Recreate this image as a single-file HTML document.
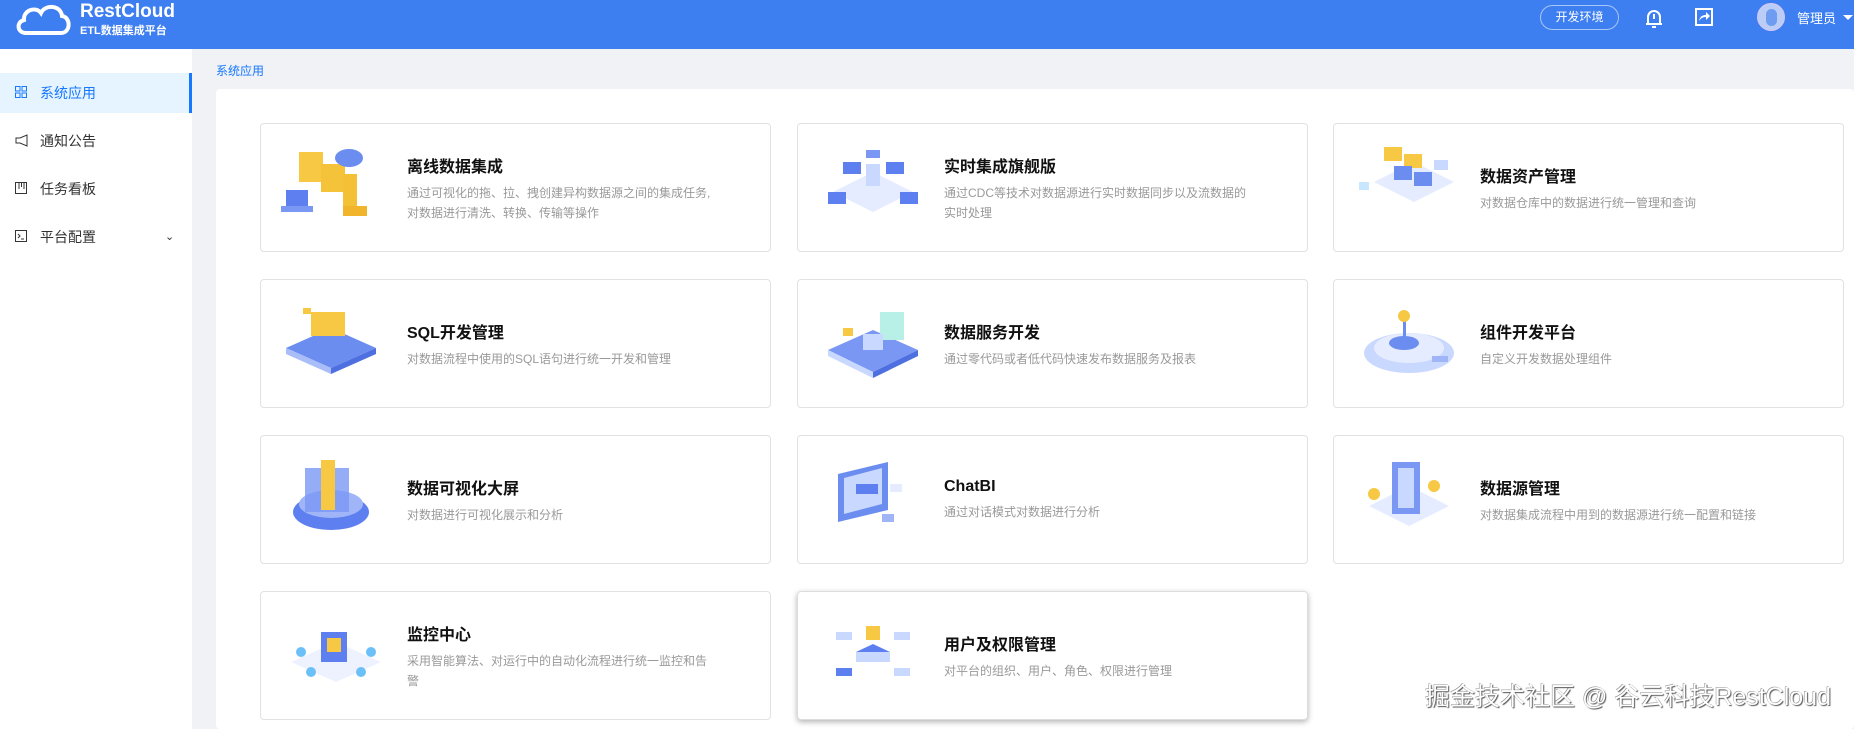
<!DOCTYPE html>
<html><head><meta charset="utf-8"><style>
*{margin:0;padding:0;box-sizing:border-box}
body{width:1854px;height:729px;overflow:hidden;background:#f0f2f5;font-family:"Liberation Sans","Noto Sans CJK SC",sans-serif;position:relative}
.hd{position:absolute;left:0;top:0;width:1854px;height:49px;background:#3d7ef0}
.side{position:absolute;left:0;top:49px;width:192px;height:680px;background:#fff}
.mi{position:absolute;left:0;width:192px;height:40px;font-size:14px;color:#333;line-height:40px;padding-left:40px}
.mi svg{position:absolute;left:15px;top:13px}
.act{background:#e6f4ff;color:#1677ff;border-right:3px solid #1677ff}
.bc{position:absolute;left:216px;top:62px;font-size:12px;color:#1677ff}
.panel{position:absolute;left:216px;top:89px;width:1638px;height:640px;background:#fff;border-radius:4px}
.card{position:absolute;width:511px;height:129px;border:1px solid #e2e2e2;border-radius:4px;background:#fff}
.card .tx{position:absolute;left:146px;top:0;height:100%;width:340px;display:flex;flex-direction:column;justify-content:center}
.card h3{font-size:16px;font-weight:bold;color:#111;margin-bottom:6px}
.card p{font-size:12px;color:#999;line-height:20px}
.card svg{position:absolute;left:20px;top:18px}
.wm{position:absolute;left:1425px;top:677px;font-size:25px;color:#fff;text-shadow:1px 1px 1px #555,-0.5px -0.5px 0 #888;white-space:nowrap}
</style></head><body>
<div class="hd">
<svg style="position:absolute;left:14px;top:2px" width="58" height="34" viewBox="0 0 58 34"><path d="M12 31 C3 31 2 20 10 18 C9 8 22 4 27 11 C31 2 47 3 48 14 C57 15 57 31 47 31 Z" fill="none" stroke="#fff" stroke-width="4"/></svg>
<div style="position:absolute;left:80px;top:1px;color:#fff;font-size:19px;font-weight:bold">RestCloud</div>
<div style="position:absolute;left:80px;top:22px;color:#fff;font-size:11px;font-weight:bold">ETL数据集成平台</div>
<div style="position:absolute;left:1540px;top:5px;width:79px;height:25px;border:1px solid #a9c6f8;border-radius:13px;color:#fff;font-size:12px;text-align:center;line-height:23px">开发环境</div>
<svg style="position:absolute;left:1645px;top:8px" width="18" height="22" viewBox="0 0 18 22"><path d="M3 16 L3 9 A6 6 0 0 1 15 9 L15 16 Z M1 16 H17 M7 19 H11" fill="none" stroke="#fff" stroke-width="2"/><path d="M9 6v5" stroke="#fff" stroke-width="2"/></svg>
<svg style="position:absolute;left:1695px;top:8px" width="18" height="18" viewBox="0 0 18 18"><rect x="1" y="1" width="16" height="16" fill="none" stroke="#fff" stroke-width="2"/><path d="M4 13 C5 8 8 7 11 7 V4 L15 8 L11 12 V9 C8 9 6 10 4 13Z" fill="#fff"/></svg>
<div style="position:absolute;left:1757px;top:3px;width:28px;height:28px;border-radius:50%;background:#b9cdf6;border:1px solid #d9c6f5"><div style="position:absolute;left:8px;top:5px;width:11px;height:17px;border-radius:6px;background:#6d9cf0"></div></div>
<div style="position:absolute;left:1797px;top:8px;color:#fff;font-size:13px">管理员</div>
<div style="position:absolute;left:1843px;top:15px;border:5px solid transparent;border-top-color:#fff"></div>
</div>
<div class="side">
<div class="mi act" style="top:24px"><svg width="12" height="12"><rect x="0.5" y="0.5" width="4.5" height="4.5" fill="none" stroke="#1677ff"/><rect x="7" y="0.5" width="4.5" height="4.5" fill="none" stroke="#1677ff"/><rect x="0.5" y="7" width="4.5" height="4.5" fill="none" stroke="#1677ff"/><rect x="7" y="7" width="4.5" height="4.5" fill="none" stroke="#1677ff"/></svg>系统应用</div>
<div class="mi" style="top:72px"><svg width="13" height="13"><path d="M1 4 H5 L12 1 V12 L5 9 H1 Z" fill="none" stroke="#333"/></svg>通知公告</div>
<div class="mi" style="top:120px"><svg width="12" height="12"><rect x="0.5" y="0.5" width="11" height="11" fill="none" stroke="#333"/><path d="M4 1v6M6.5 1v4M9 1v6" stroke="#333"/></svg>任务看板</div>
<div class="mi" style="top:168px"><svg width="12" height="12"><rect x="0.5" y="0.5" width="11" height="11" fill="none" stroke="#333"/><path d="M3 4l2 2-2 2M6 9h3" fill="none" stroke="#333"/></svg>平台配置<span style="position:absolute;left:165px;top:0;font-size:11px">&#8964;</span></div>
</div>
<div class="bc">系统应用</div>
<div class="panel"></div>

<div class="card" style="left:260px;top:123px"><svg width="110" height="90"><rect x="18" y="10" width="24" height="30" fill="#f7c844"/><rect x="40" y="22" width="24" height="28" fill="#f5c33a"/><rect x="62" y="32" width="14" height="40" fill="#f4c035"/><rect x="62" y="64" width="24" height="10" fill="#f0b52a"/><ellipse cx="68" cy="16" rx="14" ry="9" fill="#6b8df0"/><rect x="5" y="48" width="22" height="16" fill="#5d7ff0"/><rect x="0" y="64" width="32" height="6" fill="#7a97f4"/></svg><div class="tx"><h3>离线数据集成</h3><p>通过可视化的拖、拉、拽创建异构数据源之间的集成任务,<br>对数据进行清洗、转换、传输等操作</p></div></div>
<div class="card" style="left:797px;top:123px"><svg width="110" height="90"><path d="M15 50 L55 30 L95 50 L55 70Z" fill="#e6ecff"/><rect x="48" y="22" width="14" height="22" fill="#c8d8ff"/><rect x="25" y="20" width="18" height="12" fill="#5d7ff0"/><rect x="68" y="20" width="18" height="12" fill="#5d7ff0"/><rect x="10" y="50" width="18" height="12" fill="#5d7ff0"/><rect x="82" y="50" width="18" height="12" fill="#5d7ff0"/><rect x="48" y="8" width="14" height="8" fill="#7a97f4"/></svg><div class="tx"><h3>实时集成旗舰版</h3><p>通过CDC等技术对数据源进行实时数据同步以及流数据的<br>实时处理</p></div></div>
<div class="card" style="left:1333px;top:123px"><svg width="110" height="90"><path d="M20 40 L60 20 L100 40 L60 60Z" fill="#e6ecff"/><rect x="30" y="5" width="18" height="14" fill="#f7c844"/><rect x="50" y="12" width="18" height="14" fill="#f7c844"/><rect x="40" y="24" width="18" height="14" fill="#6b8df0"/><rect x="60" y="30" width="18" height="14" fill="#6b8df0"/><rect x="80" y="18" width="14" height="10" fill="#c8d8ff"/><rect x="5" y="40" width="10" height="8" fill="#c8e6ff"/></svg><div class="tx"><h3>数据资产管理</h3><p>对数据仓库中的数据进行统一管理和查询</p></div></div>

<div class="card" style="left:260px;top:279px"><svg width="110" height="90"><path d="M5 50 L50 30 L95 50 L50 70Z" fill="#6b8df0"/><path d="M5 50 L50 70 L50 76 L5 56Z" fill="#a9bdf8"/><path d="M95 50 L50 70 L50 76 L95 56Z" fill="#4d6fe0"/><rect x="30" y="14" width="34" height="24" fill="#f7c844"/><rect x="22" y="10" width="8" height="6" fill="#f7c844"/></svg><div class="tx"><h3>SQL开发管理</h3><p>对数据流程中使用的SQL语句进行统一开发和管理</p></div></div>
<div class="card" style="left:797px;top:279px"><svg width="110" height="90"><path d="M10 52 L55 32 L100 52 L55 74Z" fill="#7a97f4"/><path d="M10 52 L55 74 L55 80 L10 58Z" fill="#c8d8ff"/><path d="M100 52 L55 74 L55 80 L100 58Z" fill="#4d6fe0"/><rect x="62" y="14" width="24" height="28" fill="#b8f0e8"/><rect x="25" y="30" width="10" height="8" fill="#f7c844"/><rect x="45" y="36" width="20" height="16" fill="#c8d8ff"/></svg><div class="tx"><h3>数据服务开发</h3><p>通过零代码或者低代码快速发布数据服务及报表</p></div></div>
<div class="card" style="left:1333px;top:279px"><svg width="110" height="90"><ellipse cx="55" cy="55" rx="45" ry="20" fill="#c8d8ff"/><ellipse cx="55" cy="50" rx="35" ry="15" fill="#e6ecff"/><ellipse cx="50" cy="45" rx="15" ry="7" fill="#6b8df0"/><rect x="49" y="20" width="3" height="25" fill="#6b8df0"/><circle cx="50" cy="18" r="6" fill="#f7c844"/><rect x="78" y="58" width="16" height="6" fill="#9fb5f7"/></svg><div class="tx"><h3>组件开发平台</h3><p>自定义开发数据处理组件</p></div></div>

<div class="card" style="left:260px;top:435px"><svg width="110" height="90"><ellipse cx="50" cy="58" rx="38" ry="18" fill="#5d7ff0"/><ellipse cx="50" cy="50" rx="32" ry="14" fill="#9fb5f7"/><rect x="24" y="14" width="44" height="44" fill="#7a97f4" opacity=".8"/><rect x="40" y="6" width="14" height="50" fill="#f7c844"/></svg><div class="tx"><h3>数据可视化大屏</h3><p>对数据进行可视化展示和分析</p></div></div>
<div class="card" style="left:797px;top:435px"><svg width="110" height="90"><path d="M20 20 L70 8 L70 56 L20 68Z" fill="#6b8df0"/><path d="M26 24 L64 14 L64 50 L26 60Z" fill="#c8d8ff"/><rect x="38" y="30" width="22" height="10" fill="#5d7ff0"/><rect x="72" y="30" width="12" height="8" fill="#e6ecff"/><rect x="64" y="60" width="12" height="8" fill="#9fb5f7"/></svg><div class="tx"><h3>ChatBI</h3><p>通过对话模式对数据进行分析</p></div></div>
<div class="card" style="left:1333px;top:435px"><svg width="110" height="90"><path d="M15 52 L55 32 L95 52 L55 72Z" fill="#e6ecff"/><rect x="38" y="8" width="28" height="52" fill="#7a97f4"/><rect x="44" y="14" width="16" height="40" fill="#c8d8ff"/><circle cx="20" cy="40" r="6" fill="#f7c844"/><circle cx="80" cy="32" r="6" fill="#f7c844"/></svg><div class="tx"><h3>数据源管理</h3><p>对数据集成流程中用到的数据源进行统一配置和链接</p></div></div>

<div class="card" style="left:260px;top:591px"><svg width="110" height="90"><path d="M10 52 L55 32 L100 52 L55 72Z" fill="#eef2ff"/><rect x="40" y="22" width="26" height="30" fill="#5d7ff0"/><rect x="46" y="28" width="14" height="14" fill="#f7c844"/><circle cx="20" cy="42" r="5" fill="#6bc0f7"/><circle cx="90" cy="42" r="5" fill="#6bc0f7"/><circle cx="30" cy="62" r="5" fill="#6bc0f7"/><circle cx="80" cy="62" r="5" fill="#6bc0f7"/></svg><div class="tx"><h3>监控中心</h3><p>采用智能算法、对运行中的自动化流程进行统一监控和告<br>警</p></div></div>
<div class="card" style="left:797px;top:591px;border-color:#ddd;box-shadow:0 2px 6px rgba(0,0,0,.3)"><svg width="110" height="90"><path d="M38 42 L55 34 L72 42 L55 50Z" fill="#5d7ff0"/><rect x="38" y="42" width="34" height="10" fill="#c8d8ff"/><rect x="48" y="16" width="14" height="14" fill="#f7c844"/><rect x="18" y="22" width="16" height="8" fill="#c8d8ff"/><rect x="76" y="22" width="16" height="8" fill="#c8d8ff"/><rect x="18" y="58" width="16" height="8" fill="#5d7ff0"/><rect x="76" y="58" width="16" height="8" fill="#c8d8ff"/></svg><div class="tx"><h3>用户及权限管理</h3><p>对平台的组织、用户、角色、权限进行管理</p></div></div>

<div class="wm">掘金技术社区 @ 谷云科技RestCloud</div>
</body></html>
